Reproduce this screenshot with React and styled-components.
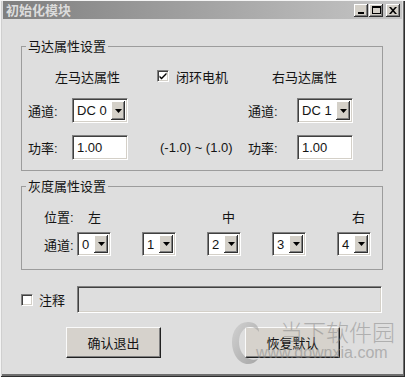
import React from 'react';
import styled, { createGlobalStyle } from 'styled-components';

const GlobalStyle = createGlobalStyle`
  html, body { margin: 0; padding: 0; background: #dedede; }
  body {
    font-family: "Liberation Sans", "Noto Sans CJK SC", sans-serif;
    font-size: 13px;
    color: #141414;
  }
`;

const Window = styled.div`
  position: relative;
  width: 405px;
  height: 377px;
  box-sizing: border-box;
  padding: 1px 3px 3px 3px;
  background: #dedede;
  box-shadow: inset 1px 1px 0 #f4f4f4, inset -1px -1px 0 #2e2e2e,
    inset 2px 0 0 #cfcfcf, inset -2px -2px 0 #6e6e6e, inset 0 -3px 0 #6e6e6e;
  overflow: hidden;
`;

const TitleBar = styled.div`
  height: 18px;
  display: flex;
  align-items: center;
  justify-content: space-between;
  padding: 0 2px 0 3px;
  background: linear-gradient(to right, #7f7f7f, #c6c6c6);
`;

const TitleText = styled.span`
  color: #dcdcdc;
  font-weight: bold;
  font-size: 13px;
  line-height: 18px;
  font-family: "Noto Sans CJK SC", sans-serif;
`;

const Captions = styled.div`
  display: flex;
  gap: 1px;
`;

const CaptionButton = styled.div`
  width: 14px;
  height: 13px;
  margin-left: ${p => p.$gap || 0}px;
  box-sizing: border-box;
  background: #d4d0c8;
  box-shadow: inset -1px -1px 0 #303030, inset 1px 1px 0 #fff, inset -2px -2px 0 #808080;
  display: flex;
  align-items: center;
  justify-content: center;
`;

const Group = styled.fieldset`
  margin: ${p => p.$top}px 19px 0 18px;
  padding: ${p => p.$pt}px 6px ${p => p.$pb}px 4px;
  border: 1px solid #9c9c9c;
  min-width: 0;
`;

const Legend = styled.legend`
  padding: 0 2px;
  font-size: 13px;
  line-height: 17px;
`;

const MotorGrid = styled.div`
  display: grid;
  grid-template-columns: 44px 56px 120px 49px 56px;
  grid-template-rows: 20px 25px 25px;
  row-gap: 12px;
  align-items: center;
  margin-left: 2px;
`;

const SideTitle = styled.div`
  grid-column: span 2;
  padding-left: ${p => p.$indent}px;
  white-space: nowrap;
`;

const Cell = styled.div`
  padding-left: ${p => p.$indent || 0}px;
  white-space: nowrap;
  display: flex;
  align-items: center;
`;

const CheckBox = styled.span`
  width: 12px;
  height: 12px;
  box-sizing: border-box;
  margin-right: ${p => p.$gap}px;
  background: #fff;
  border: 1px solid;
  border-color: #808080 #fff #fff #808080;
  box-shadow: inset 1px 1px 0 #404040, inset -1px -1px 0 #d4d0c8;
  display: flex;
  align-items: center;
  justify-content: center;
  flex: none;
`;

const Sunken = styled.div`
  width: ${p => p.$w}px;
  height: ${p => p.$h}px;
  box-sizing: border-box;
  display: flex;
  align-items: stretch;
  background: ${p => (p.$bg ? p.$bg : '#fff')};
  border: 1px solid;
  border-color: #808080 #fff #fff #808080;
  box-shadow: inset 1px 1px 0 #404040, inset -1px -1px 0 #d4d0c8;
  padding: 2px;
`;

const Value = styled.span`
  flex: 1;
  padding-left: ${p => p.$pl || 2}px;
  font-size: 13px;
  display: flex;
  align-items: center;
`;

const DropButton = styled.span`
  width: 14px;
  flex: none;
  background: #d4d0c8;
  box-shadow: inset -1px -1px 0 #303030, inset 1px 1px 0 #fff, inset -2px -2px 0 #808080;
  display: flex;
  align-items: center;
  justify-content: center;
`;

const GrayGrid = styled.div`
  display: grid;
  grid-template-columns: 33px 65px 65px 65px 65px 34px;
  grid-template-rows: 20px 24px;
  row-gap: 6px;
  align-items: center;
  margin-left: 18px;
`;

const NoteRow = styled.div`
  display: flex;
  align-items: center;
  margin: 16px 0 0 18px;
`;

const NoteField = styled(Sunken)`
  margin-left: 12px;
`;

const ButtonRow = styled.div`
  display: flex;
  gap: 84px;
  margin: 14px 0 0 63px;
`;

const PushButton = styled.div`
  width: 95px;
  height: 31px;
  box-sizing: border-box;
  background: #d6d2cc;
  border: 1px solid;
  border-color: #fafafa #202020 #202020 #fafafa;
  box-shadow: inset -1px -1px 0 #808080;
  display: flex;
  align-items: center;
  justify-content: center;
  font-size: 13px;
`;

const Watermark = styled.div`
  position: absolute;
  left: 230px;
  top: 318px;
  display: flex;
  align-items: flex-start;
  opacity: 0.55;
  pointer-events: none;
`;

const WatermarkText = styled.div`
  display: flex;
  flex-direction: column;
  margin-left: 14px;
`;

const WmTitle = styled.span`
  font-family: "Noto Sans CJK SC", sans-serif;
  font-size: 23px;
  line-height: 26px;
  font-weight: 300;
  color: #8a8a8a;
  letter-spacing: 0px;
`;

const WmUrl = styled.span`
  font-family: "Liberation Sans", sans-serif;
  font-size: 16px;
  line-height: 18px;
  color: #8a8a8a;
  margin-left: -24px;
`;

const Arrow = () => (
  <svg width="7" height="4" viewBox="0 0 7 4">
    <path d="M0 0h7L3.5 4z" fill="#000" />
  </svg>
);

const Select = ({ value, w, h }) => (
  <Sunken $w={w} $h={h}>
    <Value>{value}</Value>
    <DropButton><Arrow /></DropButton>
  </Sunken>
);

const Input = ({ value }) => (
  <Sunken $w={56} $h={25}>
    <Value>{value}</Value>
  </Sunken>
);

const Check = ({ checked, gap }) => (
  <CheckBox $gap={gap}>
    {checked && (
      <svg width="8" height="8" viewBox="0 0 8 8">
        <path d="M0.5 3.5l2 2 5-5v2l-5 5-2-2z" fill="#000" />
      </svg>
    )}
  </CheckBox>
);

export default function App() {
  return (
    <>
      <GlobalStyle />
      <Window>
        <TitleBar>
          <TitleText>初始化模块</TitleText>
          <Captions>
            <CaptionButton>
              <svg width="8" height="8" viewBox="0 0 8 8"><rect x="1" y="6" width="6" height="2" fill="#000" /></svg>
            </CaptionButton>
            <CaptionButton>
              <svg width="9" height="8" viewBox="0 0 9 8"><path d="M0 0h9v8H0z M1 2v5h7V2z" fill="#000" fillRule="evenodd" /></svg>
            </CaptionButton>
            <CaptionButton $gap={2}>
              <svg width="8" height="7" viewBox="0 0 8 7"><path d="M0 0h2l2 2.2L6 0h2L5 3.5 8 7H6L4 4.8 2 7H0l3-3.5z" fill="#000" /></svg>
            </CaptionButton>
          </Captions>
        </TitleBar>

        <Group $top={19} $pt={11} $pb={10}>
          <Legend>马达属性设置</Legend>
          <MotorGrid>
            <SideTitle $indent={27}>左马达属性</SideTitle>
            <Cell $indent={29}><Check checked gap={7} />闭环电机</Cell>
            <SideTitle $indent={24}>右马达属性</SideTitle>

            <Cell>通道:</Cell>
            <Select value="DC 0" w={56} h={25} />
            <Cell />
            <Cell>通道:</Cell>
            <Select value="DC 1" w={56} h={25} />

            <Cell>功率:</Cell>
            <Input value="1.00" />
            <Cell $indent={32}>(-1.0) ~ (1.0)</Cell>
            <Cell>功率:</Cell>
            <Input value="1.00" />
          </MotorGrid>
        </Group>

        <Group $top={7} $pt={11} $pb={13}>
          <Legend>灰度属性设置</Legend>
          <GrayGrid>
            <Cell>位置:</Cell>
            <Cell $indent={11}>左</Cell>
            <Cell />
            <Cell $indent={15}>中</Cell>
            <Cell />
            <Cell $indent={15}>右</Cell>

            <Cell>通道:</Cell>
            {['0', '1', '2', '3', '4'].map(n => (
              <Cell key={n}><Select value={n} w={34} h={24} /></Cell>
            ))}
          </GrayGrid>
        </Group>

        <NoteRow>
          <Check gap={6} />
          <span>注释</span>
          <NoteField $w={305} $h={27} $bg="#dedede" />
        </NoteRow>

        <ButtonRow>
          <PushButton>确认退出</PushButton>
          <PushButton>恢复默认</PushButton>
        </ButtonRow>

        <Watermark>
          <svg width="36" height="50" viewBox="0 0 36 50">
            <defs>
              <linearGradient id="wm" x1="0" y1="0" x2="1" y2="1">
                <stop offset="0" stopColor="#c8c8c8" />
                <stop offset="1" stopColor="#7a7a7a" />
              </linearGradient>
            </defs>
            <path d="M18 4C8 4 2 13 2 24c0 12 7 22 16 22 4 0 8-2 10-5-3 1-6 1-8 0-7-2-11-9-11-17 0-9 5-15 11-15 4 0 7 2 9 5 0-6-4-10-11-10z" fill="url(#wm)" />
          </svg>
          <WatermarkText>
            <WmTitle>当下软件园</WmTitle>
            <WmUrl>www.downxia.com</WmUrl>
          </WatermarkText>
        </Watermark>
      </Window>
    </>
  );
}
